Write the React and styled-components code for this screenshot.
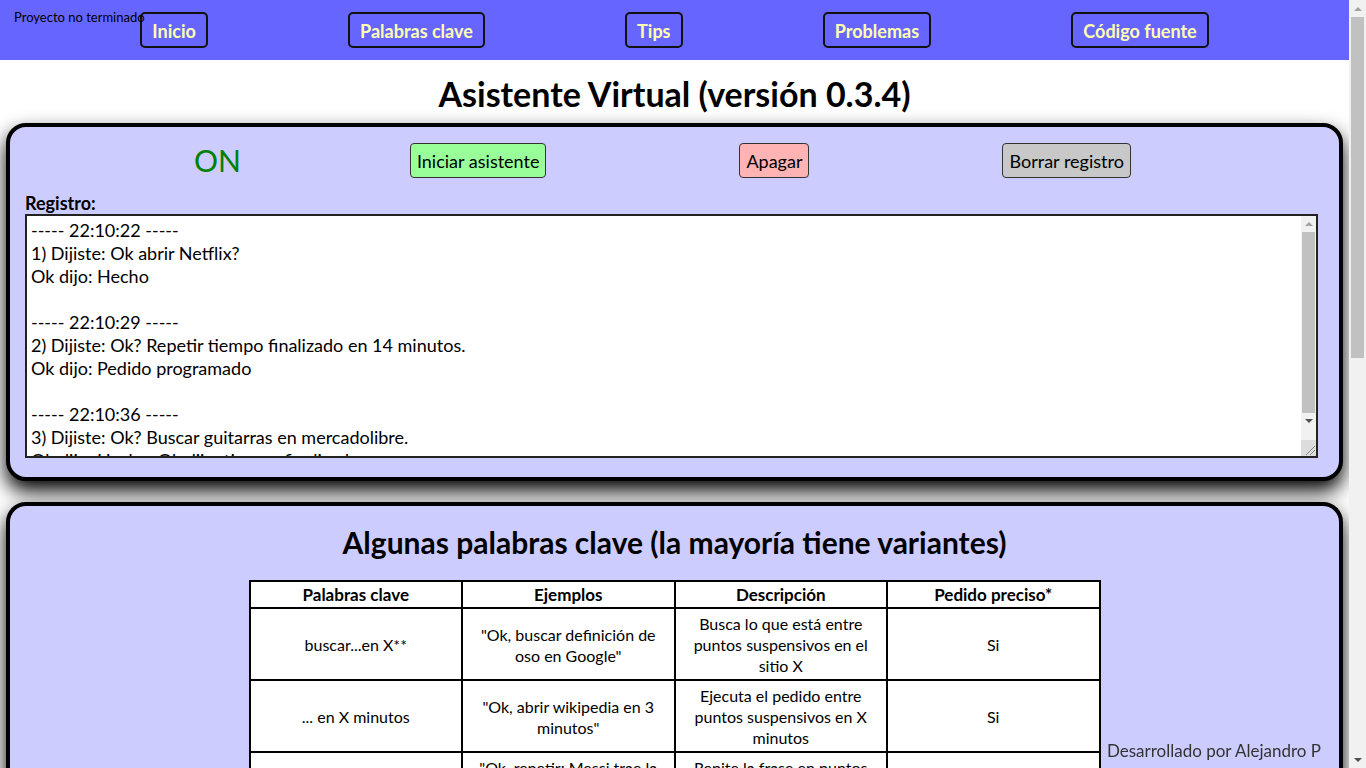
import styled, { createGlobalStyle } from "styled-components";

const GlobalStyle = createGlobalStyle`
  body {
    margin: 0;
    font-family: "Segoe UI", Lato, "Noto Sans", sans-serif;
    background: white;
  }
`;

const registro = `----- 22:10:22 -----
1) Dijiste: Ok abrir Netflix?
Ok dijo: Hecho

----- 22:10:29 -----
2) Dijiste: Ok? Repetir tiempo finalizado en 14 minutos.
Ok dijo: Pedido programado

----- 22:10:36 -----
3) Dijiste: Ok? Buscar guitarras en mercadolibre.
Ok dijo: Hecho. Ok dijo: tiempo finalizado`;

const filas = [
  ["buscar...en X**", '"Ok, buscar definición de oso en Google"', "Busca lo que está entre puntos suspensivos en el sitio X", "Si"],
  ["... en X minutos", '"Ok, abrir wikipedia en 3 minutos"', "Ejecuta el pedido entre puntos suspensivos en X minutos", "Si"],
  ["repetir...", '"Ok, repetir: Messi trae la copa"', "Repite la frase en puntos suspensivos", "No"],
  ["abrir...", '"Ok, abrir YouTube"', "Abre el sitio en puntos suspensivos", "Si"],
  ["reproducir...", '"Ok, reproducir música de los Beatles"', "Reproduce en YouTube lo que está entre puntos suspensivos", "No"],
  ["hora", '"Ok, ¿qué hora es?"', "Dice la hora actual", "No"],
  ["fecha", '"Ok, ¿qué fecha es hoy?"', "Dice la fecha actual", "No"],
  ["traducir...", '"Ok, traducir hola al inglés"', "Traduce lo que está entre puntos suspensivos", "Si"],
  ["calcular...", '"Ok, calcular 25 por 4"', "Resuelve la cuenta entre puntos suspensivos", "Si"],
  ["clima", '"Ok, ¿cómo está el clima?"', "Busca el clima en Google", "No"],
  ["apagar", '"Ok, apagar asistente"', "Apaga el asistente", "No"],
];

export default function App() {
  return (
    <Page>
      <GlobalStyle />
      <Main>
        <NavBar>
          <Aviso>Proyecto no terminado</Aviso>
          <NavButton>Inicio</NavButton>
          <NavButton>Palabras clave</NavButton>
          <NavButton>Tips</NavButton>
          <NavButton>Problemas</NavButton>
          <NavButton>Código fuente</NavButton>
        </NavBar>

        <Titulo>Asistente Virtual (versión 0.3.4)</Titulo>

        <Panel $pr={21}>
          <Controles>
            <Estado>ON</Estado>
            <Boton $bg="#99ff99">Iniciar asistente</Boton>
            <Boton $bg="#ffb3b3">Apagar</Boton>
            <Boton $bg="#c8c8c8">Borrar registro</Boton>
          </Controles>
          <Etiqueta>Registro:</Etiqueta>
          <LogBox>
            <Log readOnly value={registro} />
            <Rail $w={15}>
              <Arrow $h={16} $up $light />
              <Thumb $m={1} style={{ height: 181 }} />
              <Arrow $h={16} />
              <Corner>
                <svg width="15" height="16" viewBox="0 0 15 16">
                  <path d="M5 15 L14 6 M9 15 L14 10" stroke="#8a8a8a" strokeWidth="1" />
                </svg>
              </Corner>
            </Rail>
          </LogBox>
        </Panel>

        <Panel $pr={15}>
          <Subtitulo>Algunas palabras clave (la mayoría tiene variantes)</Subtitulo>
          <Tabla>
            <thead>
              <tr>
                <Th>Palabras clave</Th>
                <Th>Ejemplos</Th>
                <Th>Descripción</Th>
                <Th>Pedido preciso*</Th>
              </tr>
            </thead>
            <tbody>
              {filas.map((f, i) => (
                <tr key={i}>
                  {f.map((c, j) => <Td key={j}>{c}</Td>)}
                </tr>
              ))}
            </tbody>
          </Tabla>
          <Nota>* El pedido tiene que decirse tal cual está escrito.</Nota>
          <Nota>** X puede ser Google, YouTube, Wikipedia o mercadolibre.</Nota>
        </Panel>
      </Main>

      {/* barra de desplazamiento de la página */}
      <PageRail $w={17}>
        <Arrow $h={17} $up $light />
        <Thumb $m={2} style={{ height: 341 }} />
        <Arrow $h={17} />
      </PageRail>

      <Pie>Desarrollado por Alejandro P</Pie>
    </Page>
  );
}

const Page = styled.div`
  display: flex;
  align-items: flex-start;
`

const Main = styled.main`
  flex: 1;
  min-width: 0;
`

const Rail = styled.div`
  width: ${(p) => p.$w}px;
  flex-shrink: 0;
  display: flex;
  flex-direction: column;
  background-color: #f1f1f1;
`

const PageRail = styled(Rail)`
  position: sticky;
  top: 0;
  height: 100vh;
  & > :last-child {
    margin-top: auto;
  }
`

const Arrow = styled.div`
  height: ${(p) => p.$h}px;
  display: flex;
  align-items: center;
  justify-content: center;
  &::before {
    content: "";
    border-left: 4px solid transparent;
    border-right: 4px solid transparent;
    ${(p) => p.$up ? "border-bottom" : "border-top"}: 4px solid ${(p) => (p.$light ? "#a3a3a3" : "#505050")};
  }
`

const Thumb = styled.div`
  margin: 0 ${(p) => p.$m}px;
  background-color: #c1c1c1;
`

const Corner = styled.div`
  margin-top: auto;
  height: 16px;
  background-color: #dcdcdc;
  svg { display: block; }
`

const NavBar = styled.nav`
  position: relative;
  height: 60px;
  background-color: #6666ff;
  display: flex;
  align-items: center;
  justify-content: space-evenly;
`

const Aviso = styled.span`
  position: absolute;
  left: 14px;
  top: 9px;
  font-size: 13px;
  color: black;
`

const NavButton = styled.button`
  height: 36px;
  padding: 1px 10px 0;
  background-color: #6666ff;
  border: 2px solid #111;
  border-radius: 5px;
  color: #ffffb0;
  font-family: inherit;
  font-size: 18px;
  font-weight: bold;
`

const Titulo = styled.h1`
  margin: 14px 0 9px;
  text-align: center;
  font-size: 34px;
  line-height: 40px;
`

const Panel = styled.section`
  margin: 0 6px 21px;
  background-color: #ccccff;
  border: 4px solid black;
  border-radius: 20px;
  box-shadow: 0 10px 20px black;
  padding: 16px ${(p) => p.$pr}px 19px 15px;
`

const Controles = styled.div`
  display: flex;
  align-items: center;
  padding-left: 169px;
  gap: 193px;
`

const Estado = styled.span`
  margin-right: -24px;
  color: green;
  font-size: 30px;
  line-height: 35px;
`

const Boton = styled.button`
  height: 35px;
  padding: 0 6px;
  background-color: ${(p) => p.$bg};
  border: 1px solid #333;
  border-radius: 4px;
  font-family: inherit;
  font-size: 18px;
  color: black;
`

const Etiqueta = styled.div`
  margin-top: 14px;
  font-weight: bold;
  font-size: 18px;
  line-height: 22px;
`

const LogBox = styled.div`
  display: flex;
  box-sizing: border-box;
  height: 244px;
  border: 2px solid #222;
  background: white;
`

const Log = styled.textarea`
  flex: 1;
  min-width: 0;
  margin: 0;
  padding: 3px 4px;
  border: none;
  outline: none;
  font-family: inherit;
  font-size: 18px;
  line-height: 23px;
  resize: none;
  overflow: hidden;
`

const Subtitulo = styled.h2`
  margin: 1px 0 19px;
  text-align: center;
  font-size: 30px;
  line-height: 38px;
`

const Tabla = styled.table`
  margin: 0 auto;
  width: 852px;
  border-collapse: collapse;
  table-layout: fixed;
  background: white;
  font-size: 16px;
`

const Th = styled.th`
  border: 2px solid black;
  padding: 2px 4px;
  line-height: 21px;
  font-size: 17px;
`

const Td = styled.td`
  border: 2px solid black;
  padding: 4px 10px 3px;
  line-height: 21px;
  text-align: center;
`

const Nota = styled.p`
  margin: 12px 0 0;
  text-align: center;
  font-size: 16px;
`

const Pie = styled.div`
  position: fixed;
  right: 45px;
  bottom: 7px;
  color: #333;
  font-size: 17px;
`
